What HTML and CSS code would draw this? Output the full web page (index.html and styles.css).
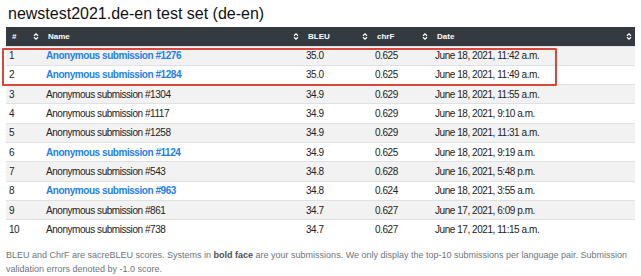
FILE: index.html
```html
<!DOCTYPE html>
<html lang="en">
<head>
    <meta charset="UTF-8">
    <title>newstest2021.de-en test set</title>
    <link rel="stylesheet" href="styles.css">
</head>
<body>
    <div class="page">
        <h2>newstest2021.de-en test set (de-en)</h2>

        <div class="board">
            <table class="results">
                <colgroup>
                    <col class="c-rank">
                    <col class="c-name">
                    <col class="c-bleu">
                    <col class="c-chrf">
                    <col class="c-date">
                </colgroup>
                <thead>
                    <tr>
                        <th><span>#</span><svg class="sort" viewBox="0 0 6 7"><path d="M1 2.8 L3 0.9 L5 2.8 M1 4.2 L3 6.1 L5 4.2"/></svg></th>
                        <th><span>Name</span><svg class="sort" viewBox="0 0 6 7"><path d="M1 2.8 L3 0.9 L5 2.8 M1 4.2 L3 6.1 L5 4.2"/></svg></th>
                        <th><span>BLEU</span><svg class="sort" viewBox="0 0 6 7"><path d="M1 2.8 L3 0.9 L5 2.8 M1 4.2 L3 6.1 L5 4.2"/></svg></th>
                        <th><span>chrF</span><svg class="sort" viewBox="0 0 6 7"><path d="M1 2.8 L3 0.9 L5 2.8 M1 4.2 L3 6.1 L5 4.2"/></svg></th>
                        <th><span>Date</span><svg class="sort" viewBox="0 0 6 7"><path d="M1 2.8 L3 0.9 L5 2.8 M1 4.2 L3 6.1 L5 4.2"/></svg></th>
                    </tr>
                </thead>
                <tbody>
                    <tr><td>1</td><td><a href="#">Anonymous submission #1276</a></td><td>35.0</td><td>0.625</td><td>June 18, 2021, 11:42 a.m.</td></tr>
                    <tr><td>2</td><td><a href="#">Anonymous submission #1284</a></td><td>35.0</td><td>0.625</td><td>June 18, 2021, 11:49 a.m.</td></tr>
                    <tr><td>3</td><td>Anonymous submission #1304</td><td>34.9</td><td>0.629</td><td>June 18, 2021, 11:55 a.m.</td></tr>
                    <tr><td>4</td><td>Anonymous submission #1117</td><td>34.9</td><td>0.629</td><td>June 18, 2021, 9:10 a.m.</td></tr>
                    <tr><td>5</td><td>Anonymous submission #1258</td><td>34.9</td><td>0.629</td><td>June 18, 2021, 11:31 a.m.</td></tr>
                    <tr><td>6</td><td><a href="#">Anonymous submission #1124</a></td><td>34.9</td><td>0.625</td><td>June 18, 2021, 9:19 a.m.</td></tr>
                    <tr><td>7</td><td>Anonymous submission #543</td><td>34.8</td><td>0.628</td><td>June 16, 2021, 5:48 p.m.</td></tr>
                    <tr><td>8</td><td><a href="#">Anonymous submission #963</a></td><td>34.8</td><td>0.624</td><td>June 18, 2021, 3:55 a.m.</td></tr>
                    <tr><td>9</td><td>Anonymous submission #861</td><td>34.7</td><td>0.627</td><td>June 17, 2021, 6:09 p.m.</td></tr>
                    <tr><td>10</td><td>Anonymous submission #738</td><td>34.7</td><td>0.627</td><td>June 17, 2021, 11:15 a.m.</td></tr>
                </tbody>
            </table>
            <!-- annotation box around the top two rows -->
            <div class="highlight"></div>
        </div>

        <p class="note">BLEU and ChrF are sacreBLEU scores. Systems in <b>bold face</b> are your submissions. We only display the top-10 submissions per language pair. Submission validation errors denoted by -1.0 score.</p>
    </div>
</body>
</html>
```

FILE: styles.css
```css
* {
    margin: 0;
    padding: 0;
    box-sizing: border-box;
}

body {
    font-family: "Liberation Sans", Arial, sans-serif;
    color: #222;
    background: #fff;
}

.page {
    padding: 0 6px;
}

h2 {
    font-size: 16px;
    font-weight: 400;
    line-height: 20px;
    margin: 4px 0 3px 2px;
    color: #111;
}

.board {
    position: relative;
}

.results {
    width: 629px;
    border-collapse: collapse;
    table-layout: fixed;
    font-size: 10px;
    letter-spacing: -0.45px;
}

.c-rank { width: 36px; }
.c-name { width: 260px; }
.c-bleu { width: 69px; }
.c-chrf { width: 60px; }

.results th {
    background: #343a40;
    color: #fff;
    font-size: 8px;
    font-weight: 700;
    letter-spacing: 0;
    text-align: left;
    height: 19px;
    padding: 0 3px 0 6px;
    vertical-align: middle;
}

.results th span {
    display: inline-block;
    vertical-align: middle;
}

.results th .sort {
    float: right;
    width: 6px;
    height: 7px;
    margin-top: 1px;
    fill: none;
    stroke: #fff;
    stroke-width: 1.3;
}

.results td {
    height: 19.3px;
    padding: 0 4px;
    line-height: 13px;
    border-top: 1px solid #dee2e6;
    vertical-align: middle;
    white-space: nowrap;
}

.results tbody tr:nth-child(odd) {
    background: #f2f2f2;
}

.results td:nth-child(1) { padding-left: 3px; }

.results a {
    color: #1e80f0;
    font-weight: 700;
    text-decoration: none;
}

.highlight {
    position: absolute;
    left: -4px;
    top: 21px;
    width: 555px;
    height: 38px;
    border: 2px solid #d9473a;
    border-radius: 1px;
}

.note {
    margin-top: 9px;
    font-size: 9px;
    line-height: 14px;
    color: #6c757d;
}

.note b {
    color: #495057;
}
```
